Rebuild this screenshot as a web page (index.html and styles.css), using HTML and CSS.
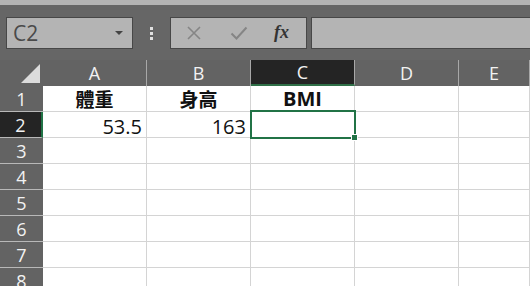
FILE: index.html
```html
<!DOCTYPE html>
<html>
<head>
  <title>BMI</title>
  <link rel="stylesheet" href="styles.css">
</head>
<body>
  <div class="top-strip"></div>
  <div class="toolbar">
    <div class="name-box">
      <span class="name-text">C2</span>
      <span class="caret"></span>
    </div>
    <div class="grip">
      <span></span><span></span><span></span>
    </div>
    <div class="fx-buttons">
      <svg class="fx-icon" width="16" height="16" viewBox="0 0 16 16">
        <path d="M2 2 L14 14 M14 2 L2 14" stroke="#858585" stroke-width="1.6" fill="none"/>
      </svg>
      <svg class="fx-icon" width="18" height="16" viewBox="0 0 18 16">
        <path d="M1.5 8.5 L6.5 13.5 L16.5 2.5" stroke="#858585" stroke-width="2" fill="none"/>
      </svg>
      <span class="fx-label">fx</span>
    </div>
    <div class="formula-input"></div>
  </div>

  <div class="sheet">
    <div class="corner"><span class="select-all"></span></div>
    <div class="col-head">A</div>
    <div class="col-head">B</div>
    <div class="col-head active">C</div>
    <div class="col-head">D</div>
    <div class="col-head">E</div>

    <div class="row-head">1</div>
    <div class="cell center bold cjk">體重</div>
    <div class="cell center bold cjk">身高</div>
    <div class="cell center bold">BMI</div>
    <div class="cell"></div>
    <div class="cell"></div>

    <div class="row-head active">2</div>
    <div class="cell right">53.5</div>
    <div class="cell right">163</div>
    <div class="cell selected"></div>
    <div class="cell"></div>
    <div class="cell"></div>

    <div class="row-head">3</div>
    <div class="cell"></div><div class="cell"></div><div class="cell"></div><div class="cell"></div><div class="cell"></div>
    <div class="row-head">4</div>
    <div class="cell"></div><div class="cell"></div><div class="cell"></div><div class="cell"></div><div class="cell"></div>
    <div class="row-head">5</div>
    <div class="cell"></div><div class="cell"></div><div class="cell"></div><div class="cell"></div><div class="cell"></div>
    <div class="row-head">6</div>
    <div class="cell"></div><div class="cell"></div><div class="cell"></div><div class="cell"></div><div class="cell"></div>
    <div class="row-head">7</div>
    <div class="cell"></div><div class="cell"></div><div class="cell"></div><div class="cell"></div><div class="cell"></div>
    <div class="row-head">8</div>
    <div class="cell"></div><div class="cell"></div><div class="cell"></div><div class="cell"></div><div class="cell"></div>
  </div>
</body>
</html>
```

FILE: styles.css
```css
html, body {
  margin: 0;
  height: 286px;
  overflow: hidden;
}

body {
  background-color: #666666;
  font-family: "Open Sans", "Noto Sans CJK TC", sans-serif;
}

.top-strip {
  height: 5px;
  background-color: #b4b4b4;
}

.toolbar {
  display: flex;
  align-items: flex-start;
  height: 55px;
  padding: 12px 0 0 6px;
  box-sizing: border-box;
}

.name-box,
.fx-buttons,
.formula-input {
  height: 32px;
  box-sizing: border-box;
  border: 1px solid #474747;
  background-color: #b4b4b4;
}

.name-box {
  width: 127px;
  display: flex;
  align-items: center;
  justify-content: space-between;
  padding: 0 9px 0 6px;
}

.name-text {
  font-size: 21px;
  color: #4a4a4a;
  line-height: 1;
}

.caret {
  width: 0;
  height: 0;
  border-left: 4px solid transparent;
  border-right: 4px solid transparent;
  border-top: 4px solid #444444;
}

.grip {
  width: 37px;
  height: 32px;
  display: flex;
  flex-direction: column;
  align-items: center;
  justify-content: center;
  gap: 2px;
}

.grip span {
  width: 3px;
  height: 3px;
  background-color: #e0e0e0;
}

.fx-buttons {
  width: 137px;
  display: flex;
  align-items: center;
  padding-left: 15px;
}

.fx-icon {
  margin-right: 28px;
}

.fx-icon + .fx-icon {
  margin-right: 26px;
}

.fx-label {
  font-family: "Liberation Serif", serif;
  font-style: italic;
  font-weight: bold;
  font-size: 18px;
  color: #333333;
  margin-top: -2px;
}

.formula-input {
  flex: 1;
  margin-left: 4px;
  margin-right: -2px;
}

.sheet {
  display: grid;
  grid-template-columns: 43px repeat(4, 104px) 1fr;
  grid-auto-rows: 26px;
  background-color: #ffffff;
}

.corner,
.col-head,
.row-head {
  background-color: #636363;
  color: #f2f2f2;
  box-sizing: border-box;
  display: flex;
  align-items: center;
  justify-content: center;
  font-size: 18px;
}

.corner {
  position: relative;
  border-right: 1px solid #636363;
}

.select-all {
  position: absolute;
  right: 2px;
  bottom: 3px;
  width: 0;
  height: 0;
  border-left: 19px solid transparent;
  border-bottom: 19px solid #dcdcdc;
}

.col-head {
  border-right: 1px solid #a8a8a8;
}

.col-head.active {
  background-color: #242424;
  border-bottom: 2px solid #2f6f47;
}

.row-head {
  border-bottom: 1px solid #b8b8b8;
}

.row-head.active {
  background-color: #242424;
  border-right: 2px solid #217346;
}

.cell {
  box-sizing: border-box;
  border-right: 1px solid #d4d4d4;
  border-bottom: 1px solid #d4d4d4;
  display: flex;
  align-items: center;
  font-size: 20px;
  color: #111111;
  padding: 0 4px;
}

.cell.center {
  justify-content: center;
}

.cell.right {
  justify-content: flex-end;
  padding-top: 3px;
}

.cell.bold {
  font-weight: bold;
}

.cell.cjk {
  font-size: 19px;
}

.cell.selected {
  position: relative;
}

.cell.selected::after {
  content: "";
  position: absolute;
  left: -1px;
  top: -2px;
  right: -2px;
  bottom: -2px;
  border: 2px solid #217346;
}

.cell.selected::before {
  content: "";
  position: absolute;
  right: -4px;
  bottom: -4px;
  width: 5px;
  height: 5px;
  background-color: #217346;
  border: 1px solid #ffffff;
  z-index: 1;
}
```
